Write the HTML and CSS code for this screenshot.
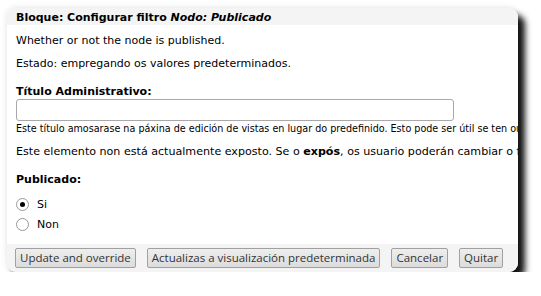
FILE: index.html
```html
<!DOCTYPE html>
<html>
<head>
<meta charset="utf-8">
<link rel="stylesheet" href="styles.css">
</head>
<body>
<div class="page">
  <div class="dialog">
    <div class="titlebar">Bloque: Configurar filtro <em>Nodo: Publicado</em></div>
    <div class="content">
      <p class="desc first">Whether or not the node is published.</p>
      <p class="desc">Estado: empregando os valores predeterminados.</p>
      <div class="field">
        <label class="label">Título Administrativo:</label>
        <input class="text-input" type="text">
        <div class="help">Este título amosarase na páxina de edición de vistas en lugar do predefinido. Esto pode ser útil se ten outros filtros semellantes.</div>
      </div>
      <p class="desc exposed">Este elemento non está actualmente exposto. Se o <strong>expós</strong>, os usuario poderán cambiar o filtro.</p>
      <div class="field">
        <div class="label">Publicado:</div>
        <div class="radios">
          <label class="radio"><span class="circle checked"></span>Si</label>
          <label class="radio"><span class="circle"></span>Non</label>
        </div>
      </div>
    </div>
    <div class="buttons">
      <button class="btn">Update and override</button>
      <button class="btn">Actualizas a visualización predeterminada</button>
      <button class="btn">Cancelar</button>
      <button class="btn">Quitar</button>
    </div>
  </div>
</div>
</body>
</html>
```
FILE: styles.css
```css
html, body {
  margin: 0;
  padding: 0;
  background: #fff;
}
.page {
  padding: 8px 0 0 7px;
}
.dialog {
  width: 511px;
  height: 264px;
  border-radius: 9px;
  background: #fff;
  overflow: hidden;
  display: flex;
  flex-direction: column;
  box-shadow: 0 0 6px rgba(0,0,0,0.12), 7px 7px 6px rgba(0,0,0,0.92);
  font-family: "DejaVu Sans", sans-serif;
  color: #000;
}
.titlebar {
  background: #f4f4f4;
  height: 17px;
  padding-left: 9px;
  font-size: 11px;
  font-weight: bold;
  line-height: 19px;
  white-space: nowrap;
  flex-shrink: 0;
}
.content {
  flex: 1;
  padding: 0 9px;
  font-size: 11px;
  white-space: nowrap;
  overflow: hidden;
}
.desc {
  margin: 7px 0 0;
  line-height: 16px;
}
.desc.first {
  margin-top: 8px;
}
.desc.exposed {
  margin-top: 8px;
  font-size: 11.1px;
}
.field {
  margin-top: 13px;
}
.label {
  display: block;
  font-weight: bold;
  line-height: 14px;
}
.text-input {
  display: block;
  box-sizing: border-box;
  width: 438px;
  height: 22px;
  margin: 0;
  border: 1px solid #a8a8a8;
  border-radius: 3px;
  background: #fff;
}
.help {
  font-size: 9.6px;
  line-height: 15px;
}
.radios {
  margin-top: 7px;
}
.radio {
  display: flex;
  align-items: center;
  height: 20px;
  font-size: 11px;
}
.circle {
  box-sizing: border-box;
  width: 13px;
  height: 13px;
  border: 1px solid #9a9a9a;
  border-radius: 50%;
  margin-right: 8px;
  background: #fff;
  position: relative;
}
.circle.checked::after {
  content: "";
  position: absolute;
  left: 3px;
  top: 3px;
  width: 5px;
  height: 5px;
  border-radius: 50%;
  background: #000;
}
.buttons {
  background: #f4f4f4;
  height: 28px;
  flex-shrink: 0;
  display: flex;
  align-items: center;
  padding-left: 8px;
  gap: 11px;
}
.btn {
  flex-shrink: 0;
  white-space: nowrap;
  font-family: "Open Sans", sans-serif;
  font-size: 11.5px;
  height: 20px;
  padding: 0 4px;
  border: 1px solid #a0a0a0;
  border-radius: 2px;
  background: linear-gradient(#eeeeee, #dcdcdc);
  color: #333;
  line-height: 18px;
}
```
